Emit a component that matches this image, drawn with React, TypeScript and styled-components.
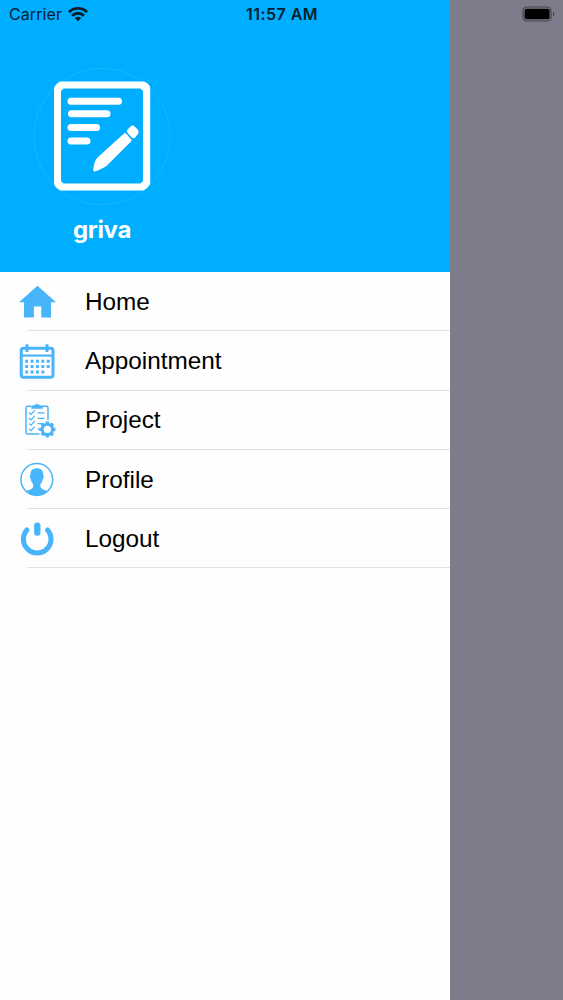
import React from "react";
import styled, { createGlobalStyle } from "styled-components";

const Global = createGlobalStyle`
  * { box-sizing: border-box; }
  body { margin: 0; background: #7c7c8a; overflow: hidden; }
`;

const Screen = styled.div`
  position: relative;
  width: 563px;
  height: 1000px;
  display: flex;
  background: #7c7c8a;
  color: #000;
  font-family: "Liberation Sans", Arial, sans-serif;
`;

const StatusBar = styled.div`
  position: absolute;
  inset: 0 0 auto 0;
  height: 28px;
  padding: 0 7px 0 9px;
  display: grid;
  grid-template-columns: 1fr auto 1fr;
  align-items: center;
  font-family: Inter, sans-serif;
  color: #06202f;
`;

const Carrier = styled.div`
  display: flex;
  align-items: center;
  gap: 6px;
  font-size: 16px;
  letter-spacing: 0.1px;
`;

const Clock = styled.div`
  font-size: 16px;
  font-weight: 600;
  letter-spacing: 0.45px;
  margin-right: 1px;
`;

const BatterySlot = styled.div`
  display: flex;
  justify-content: flex-end;
`;

const Drawer = styled.aside`
  width: 450px;
  height: 100%;
  background: #fefefe;
`;

const Header = styled.header`
  height: 272px;
  padding: 67px 0 0 33px;
  background: #00aeff;
`;

const Profile = styled.div`
  width: 138px;
  display: flex;
  flex-direction: column;
  align-items: center;
`;

const UserName = styled.div`
  margin-top: 10px;
  font: 700 24px/30px Inter, sans-serif;
  letter-spacing: -0.3px;
  color: #fff;
`;

const Menu = styled.nav`
  display: flex;
  flex-direction: column;
`;

const MenuItem = styled.div`
  height: 59.3px;
  padding-left: 17px;
  display: flex;
  align-items: center;
  gap: 28px;
  background: linear-gradient(#e2e2e3, #e2e2e3) 27px 100% / 100% 1px no-repeat;
`;

const Label = styled.span`
  font-size: 24.3px;
  line-height: 30px;
`;

const MenuIcon = styled.svg`
  width: 40px;
  height: 40px;
  flex: none;
  color: #48b4fa;
`;

const Wifi = () => (
  <svg width="20" height="16" viewBox="0 0 20 16" fill="none" stroke="#06202f" strokeWidth="2.9">
    <path d="M1 6.1a12.8 12.8 0 0 1 18 0" />
    <path d="M4.1 9.7a8.3 8.3 0 0 1 11.8 0" />
    <path d="M6.8 12.1a4.5 4.5 0 0 1 6.4 0L10 15.3Z" fill="#06202f" stroke="none" />
  </svg>
);

const Battery = () => (
  <svg width="34" height="16" viewBox="0 0 34 16">
    <rect x="1" y="1" width="28" height="14" rx="4" fill="none" stroke="#464650" strokeWidth="1.2" />
    <rect x="2.6" y="2.8" width="25" height="10.5" rx="2" fill="#000" />
    <path d="M31 5.5q3 2.5 0 5Z" fill="#464650" />
  </svg>
);

const Logo = () => (
  <svg width="138" height="138" viewBox="0 0 138 138">
    <circle cx="69" cy="69.5" r="68" fill="none" stroke="#20b8fd" strokeWidth="0.8" />
    <path
      fill="#fff"
      fillRule="evenodd"
      d="M27 14.5H111Q117 17 117.2 21V117Q115 121 110.5 123.5H27.5Q22.5 121 21 117V21Q22.5 17 27 14.5ZM30.5 21.5L28 24V114L30.5 116.5H107.5L110 114V24L107.5 21.5Z"
    />
    <g stroke="#fff" strokeWidth="7" strokeLinecap="round">
      <path d="M38 34.2H85.5M38.5 46.8H74M38 60.4H63.5M38 74H54" />
    </g>
    <path
      fill="#fff"
      d="M91 66.5Q92.1 65.7 93 66.6L98.3 72.6Q99 73.6 98 74.6L73.5 99Q71 101 62.6 104.2Q60 105 60.1 102.5Q61.5 93.5 64 91ZM94.2 63L97.5 59.6Q99.5 57.6 101.9 59.7L104.4 62.3Q106.5 64.9 104.9 67.1L102.1 70.8Q100.3 72 98.5 70.2L94.3 65.6Q93.1 64.3 94.2 63Z"
    />
  </svg>
);

const HomeIcon = () => (
  <MenuIcon viewBox="0 0 40 40">
    <path fill="currentColor" d="M20.5 3.8L39 20.2H34V35.4H24.3V24.5H16.9V35.4H7V20.2H2Z" />
  </MenuIcon>
);

const CalendarIcon = () => (
  <MenuIcon viewBox="0 0 40 40" fill="none" stroke="currentColor">
    <rect x="4.2" y="7.2" width="31.8" height="29" rx="2.5" strokeWidth="3" />
    <path d="M4 14.6H36" strokeWidth="2.2" />
    <path d="M10 3.2V11M30 3.2V11" strokeWidth="3" />
    <path d="M8.2 20.2H33M8.2 25.6H33M8.2 31H28" strokeWidth="3" strokeDasharray="2.9 2.5" />
  </MenuIcon>
);

const teeth = [0, 45, 90, 135, 180, 225, 270, 315];

const ProjectIcon = () => (
  <MenuIcon viewBox="0 0 40 40" fill="none" stroke="currentColor">
    <path d="M14 6.3H10.5Q9 6.3 9 8V32.5Q9 34 10.5 34H22.5M25 6.3H29.5Q31 6.3 31 8V20" strokeWidth="1.5" />
    <path d="M14.5 8.5V6L18.3 5Q20 2.8 21.7 5L25.5 6V8.5Z" fill="currentColor" strokeWidth="0.5" />
    <path d="M20.5 12.8H27.5M20.5 18.3H27.5M20.5 23.7H25M20.5 29.2H23" strokeWidth="1.2" />
    <path
      d="M12 12.5l2 1.8 3.7-4M12 18l2 1.8 3.7-4M12 23.4l2 1.8 3.7-4M12 28.8l2 1.8 3.7-4"
      strokeWidth="1.2"
    />
    <circle cx="30.4" cy="29.4" r="5.2" strokeWidth="3" />
    {teeth.map((angle) => (
      <path key={angle} d="M30.4 24V21.4" strokeWidth="3.2" transform={`rotate(${angle} 30.4 29.4)`} />
    ))}
  </MenuIcon>
);

const ProfileIcon = () => (
  <MenuIcon viewBox="0 0 40 40">
    <circle cx="19.8" cy="19.5" r="15.9" fill="none" stroke="currentColor" strokeWidth="1.5" />
    <path
      fill="currentColor"
      d="M19.8 8.3Q26.6 8.3 26.4 15.5Q27.5 17 26 19Q25.2 22.5 23.5 24V27Q24.5 29.5 30 30.7Q26 35.5 19.8 35.5Q13.5 35.5 9.5 30.7Q15 29.5 16.1 27V24Q14.4 22.5 13.6 19Q12.1 17 13.2 15.5Q13 8.3 19.8 8.3Z"
    />
  </MenuIcon>
);

const PowerIcon = () => (
  <MenuIcon viewBox="0 0 40 40" fill="none" stroke="currentColor" strokeLinecap="round">
    <path d="M9.9 11A13.8 13.8 0 1 0 30.5 11" strokeWidth="5" />
    <path d="M20.3 6.8V13.5" strokeWidth="6.4" />
  </MenuIcon>
);

const items = [
  { label: "Home", Icon: HomeIcon },
  { label: "Appointment", Icon: CalendarIcon },
  { label: "Project", Icon: ProjectIcon },
  { label: "Profile", Icon: ProfileIcon },
  { label: "Logout", Icon: PowerIcon },
];

export default function App() {
  return (
    <>
      <Global />
      <Screen>
        <Drawer>
          <Header>
            <Profile>
              <Logo />
              <UserName>griva</UserName>
            </Profile>
          </Header>
          <Menu>
            {items.map(({ label, Icon }) => (
              <MenuItem key={label}>
                <Icon />
                <Label>{label}</Label>
              </MenuItem>
            ))}
          </Menu>
        </Drawer>
        <StatusBar>
          <Carrier>
            Carrier
            <Wifi />
          </Carrier>
          <Clock>11:57 AM</Clock>
          <BatterySlot>
            <Battery />
          </BatterySlot>
        </StatusBar>
      </Screen>
    </>
  );
}
